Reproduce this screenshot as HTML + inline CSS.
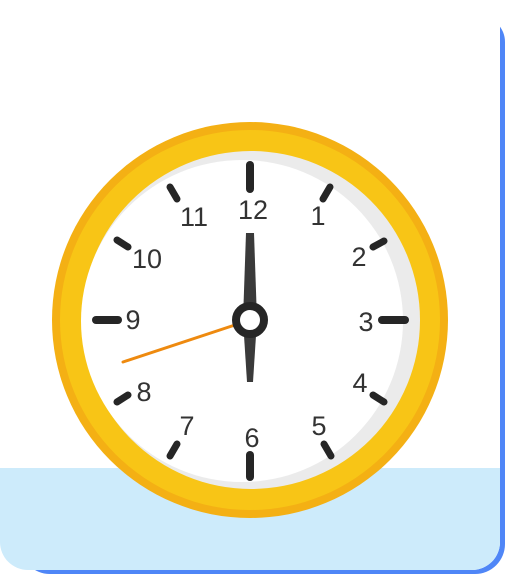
<!DOCTYPE html>
<html><head><style>
html,body{margin:0;padding:0;background:#fff;width:506px;height:575px;overflow:hidden}
.blue{position:absolute;left:20px;top:16px;width:485px;height:558px;background:#4F86F7;border-radius:0 26px 30px 30px}
.card{position:absolute;left:0;top:0;width:500px;height:570px;background:#fff;border-radius:0 22px 28px 28px;overflow:hidden}
.sky{position:absolute;left:0;top:468px;width:100%;height:110px;background:#CDEBFB}
svg{position:absolute;left:0;top:0}
text{font-family:"Liberation Sans",sans-serif;font-size:27px;fill:#333;text-anchor:middle;dominant-baseline:central}
</style></head><body>
<div class="blue"></div>
<div class="card"><div class="sky"></div></div>
<svg width="506" height="575" viewBox="0 0 506 575">
<circle cx="250" cy="320" r="198" fill="#F4B014"/>
<circle cx="250" cy="320" r="190" fill="#F8C516"/>
<circle cx="251" cy="320" r="169" fill="#EBEBEB"/>
<circle cx="242" cy="321" r="161" fill="#fff"/>
<g stroke="#262626" stroke-linecap="round" fill="none">
<g stroke-width="8">
<line x1="250" y1="165" x2="250" y2="189"/>
<line x1="250" y1="455" x2="250" y2="477"/>
<line x1="96" y1="320" x2="118" y2="320"/>
<line x1="382" y1="320" x2="405" y2="320"/>
</g>
<g stroke-width="7">
<line x1="170" y1="187" x2="177" y2="199"/>
<line x1="330" y1="187" x2="323" y2="199"/>
<line x1="117" y1="240" x2="128" y2="247"/>
<line x1="384" y1="241" x2="373" y2="247"/>
<line x1="373" y1="395" x2="384" y2="402"/>
<line x1="128" y1="395" x2="117" y2="402"/>
<line x1="324" y1="444" x2="331" y2="456"/>
<line x1="177" y1="444" x2="170" y2="456"/>
</g>
</g>
<text x="253" y="210">12</text>
<text x="194" y="217">11</text>
<text x="318" y="216">1</text>
<text x="359" y="257">2</text>
<text x="366" y="322">3</text>
<text x="360" y="383">4</text>
<text x="319" y="426">5</text>
<text x="252" y="438">6</text>
<text x="187" y="426">7</text>
<text x="144" y="392">8</text>
<text x="133" y="320">9</text>
<text x="147" y="259">10</text>
<polygon points="246,233 254,233 257,320 253,382 247,382 243,320" fill="#3A3A3A"/>
<line x1="250" y1="320" x2="123" y2="362" stroke="#EE8A0F" stroke-width="3" stroke-linecap="round"/>
<circle cx="250" cy="320" r="14" fill="#fff" stroke="#262626" stroke-width="8"/>
</svg>
</body></html>
